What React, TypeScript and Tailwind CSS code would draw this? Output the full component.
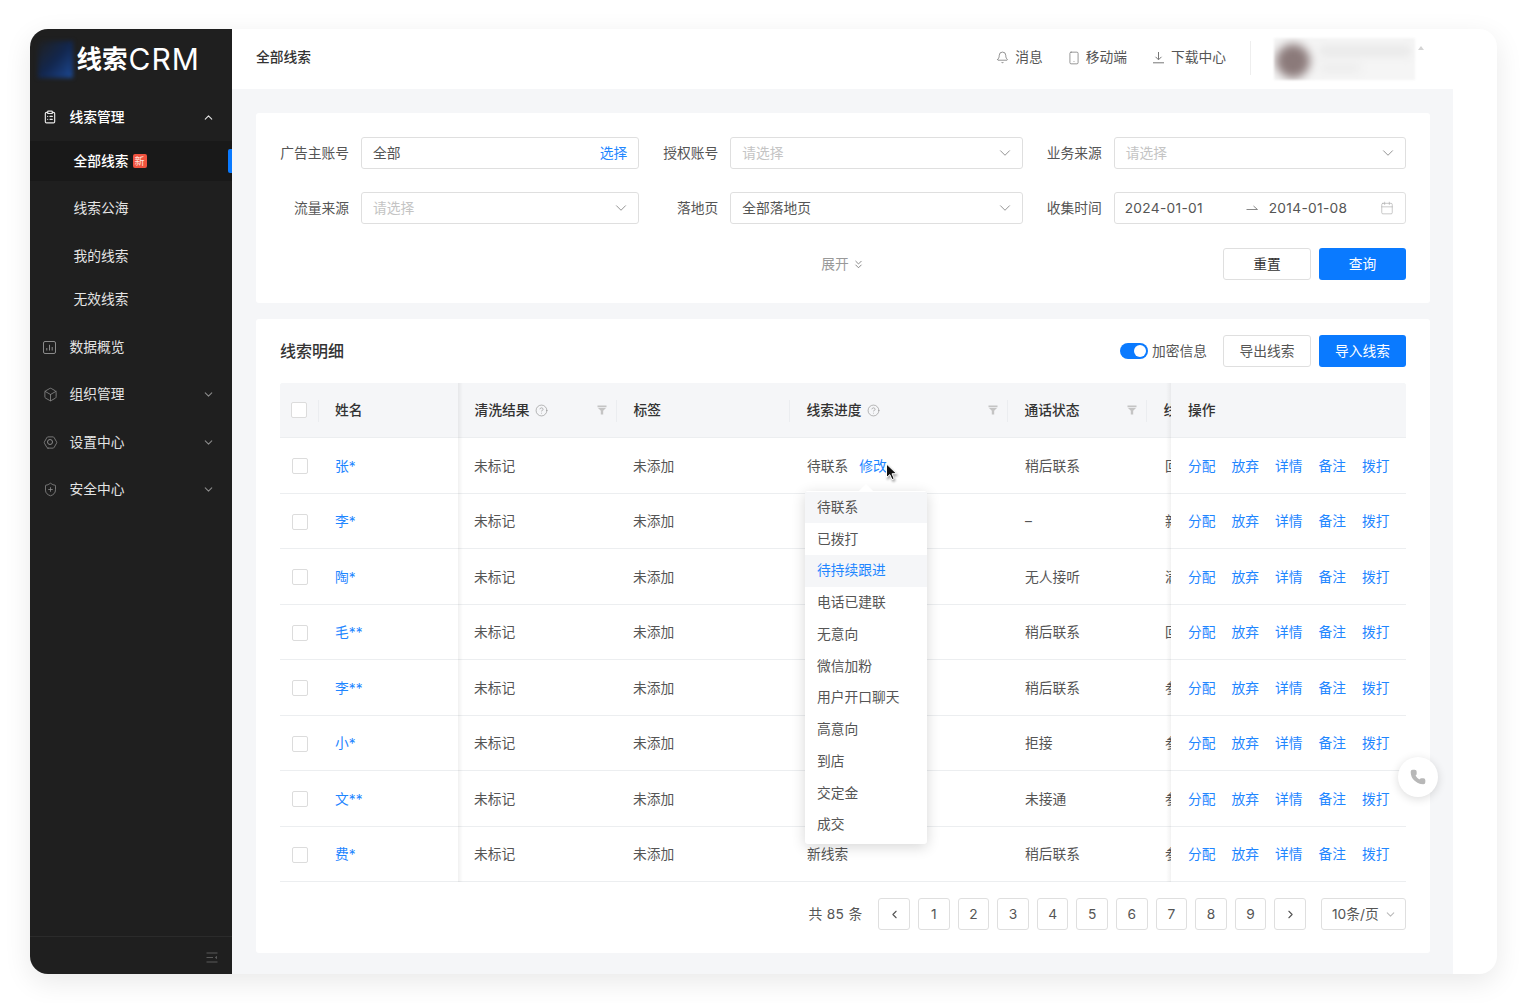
import { Bell, Box, Calendar, ChevronDown, ChevronLeft, ChevronRight, ChevronUp, ChevronsDown, CircleHelp, ClipboardList, Hexagon, Phone, ShieldPlus, Smartphone } from "lucide-react";
import type { ReactNode } from "react";

const rows = [
  { name: "张*", progress: "待联系", call: "稍后联系", next: "回" },
  { name: "李*", progress: "", call: "–", next: "新" },
  { name: "陶*", progress: "", call: "无人接听", next: "满" },
  { name: "毛**", progress: "", call: "稍后联系", next: "回" },
  { name: "李**", progress: "", call: "稍后联系", next: "参" },
  { name: "小*", progress: "", call: "拒接", next: "参" },
  { name: "文**", progress: "", call: "未接通", next: "参" },
  { name: "费*", progress: "新线索", call: "稍后联系", next: "参" },
];

const progressOptions = ["待联系", "已拨打", "待持续跟进", "电话已建联", "无意向", "微信加粉", "用户开口聊天", "高意向", "到店", "交定金", "成交"];

function ChartIcon() {
  return (
    <svg width="13" height="13" viewBox="0 0 13 13" fill="none" stroke="#8a8a8a" strokeWidth="1">
      <rect x="0.5" y="0.5" width="12" height="12" rx="1.5" />
      <path d="M3.8 9.5V7M6.5 9.5V3.8M9.2 9.5V6" />
    </svg>
  );
}

function SettingIcon() {
  return (
    <span className="relative flex h-[15px] w-[15px] items-center justify-center">
      <Hexagon size={15} strokeWidth={1.3} color="#8a8a8a" className="rotate-90" />
      <span className="absolute h-[6px] w-[6px] rounded-full border border-[#8a8a8a]" />
    </span>
  );
}

function Funnel() {
  return (
    <svg width="10" height="10" viewBox="0 0 10 10" fill="#c4c4c4">
      <path d="M0.5 0.5H9.5V2.2H0.5Z" />
      <path d="M1 3H9L6.2 5.8V9.5H3.8V5.8Z" />
    </svg>
  );
}

function DownloadIcon() {
  return (
    <svg width="13" height="13" viewBox="0 0 13 13" fill="none" stroke="#777" strokeWidth="1" className="ml-[25px]">
      <path d="M6.5 1V8.5M3.5 5.8L6.5 8.8L9.5 5.8M1 11.8H12" />
    </svg>
  );
}

function RangeArrow() {
  return (
    <svg width="12" height="8" viewBox="0 0 12 8" fill="none" stroke="#888" strokeWidth="1">
      <path d="M0.5 5.5H11.5L7.5 2" />
    </svg>
  );
}

function NavItem({ icon, label, chevron, className }: { icon: ReactNode; label: string; chevron?: "up" | "down"; className: string }) {
  return (
    <div className={`flex items-center pl-[13px] pr-[17px] ${className}`}>
      <span className="flex w-[27px] shrink-0">{icon}</span>
      <span className="flex-1">{label}</span>
      {chevron === "up" && <ChevronUp size={13} color="#e5e5e5" />}
      {chevron === "down" && <ChevronDown size={13} color="#8a8a8a" />}
    </div>
  );
}

function Sidebar() {
  return (
    <aside className="flex w-[202.5px] shrink-0 flex-col bg-[#1f1f1f] text-[13.75px] text-[#e4e4e4]">
      <div className="flex h-[64px] items-center pb-[4px] pl-[8px]">
        <div className="h-[37px] w-[35px] bg-gradient-to-br from-[#1f1f1f] via-[#12264d] to-[#1c4a96] blur-[2px]" />
        <div className="ml-[4px] flex items-center font-bold leading-none text-white">
          <span className="text-[25.5px]">线索</span>
          <span className="ml-[1px] text-[30px] font-normal tracking-[1px]">CRM</span>
        </div>
      </div>
      <NavItem icon={<ClipboardList size={14} color="#e8e8e8" />} label="线索管理" chevron="up" className="h-[48px] font-medium text-white" />
      <div className="relative flex h-[40px] items-center bg-[#191919] pl-[44px] font-medium text-white">
        全部线索
        <span className="ml-[4px] flex h-[14px] w-[14px] items-center justify-center rounded-[2px] bg-[#f0533f] text-[10px] font-normal leading-none text-[#ffe1dc]">新</span>
        <span className="absolute right-0 top-[8px] h-[24px] w-[4px] rounded-l-[2px] bg-[#0a7aff]" />
      </div>
      <div className="mt-[3px] flex h-[48px] items-center pl-[44px]">线索公海</div>
      <div className="flex h-[48px] items-center pl-[44px]">我的线索</div>
      <div className="flex h-[38px] items-center pl-[44px]">无效线索</div>
      <NavItem icon={<ChartIcon />} label="数据概览" className="mt-[5px] h-[48px]" />
      <NavItem icon={<Box size={15} strokeWidth={1.3} color="#8a8a8a" />} label="组织管理" chevron="down" className="h-[47.5px]" />
      <NavItem icon={<SettingIcon />} label="设置中心" chevron="down" className="h-[47.5px]" />
      <NavItem icon={<ShieldPlus size={15} strokeWidth={1.3} color="#8a8a8a" />} label="安全中心" chevron="down" className="h-[47.5px]" />
      <div className="mt-auto flex h-[38px] items-center justify-end border-t border-[#2b2b2b] pr-[14px] pt-[3px]">
        <svg width="12" height="11" viewBox="0 0 12 11" fill="none" stroke="#5a5a5a" strokeWidth="1.2">
          <path d="M0.5 1H11.5M0.5 5.5H7M0.5 10H11.5" />
          <path d="M11 3.8V7.2L8.8 5.5Z" fill="#5a5a5a" stroke="none" />
        </svg>
      </div>
    </aside>
  );
}

function TopBar() {
  return (
    <header className="flex h-[60px] items-center pb-[3px] pl-[24px] text-[13.75px] text-[#555]">
      <div className="font-medium text-[#333]">全部线索</div>
      <div className="ml-auto flex items-center">
        <Bell size={13} strokeWidth={1.3} color="#666" />
        <span className="ml-[6px]">消息</span>
        <Smartphone size={14} strokeWidth={1.3} color="#777" className="ml-[24px]" />
        <span className="ml-[5px]">移动端</span>
        <DownloadIcon />
        <span className="ml-[6px]">下载中心</span>
        <div className="ml-[24px] h-[34px] w-px bg-[#eeeeee]" />
        <div className="relative ml-[23px] mt-[3px] h-[42px] w-[141px] overflow-hidden bg-[#f5f5f5] blur-[1px]">
          <div className="absolute left-[2px] top-[6px] h-[34px] w-[34px] rounded-full bg-[#8b7a7a] blur-[5px]" />
          <div className="absolute left-[46px] top-[8px] h-[10px] w-[90px] bg-[#e8e8e8] blur-[4px]" />
          <div className="absolute left-[46px] top-[26px] h-[8px] w-[40px] bg-[#ececec] blur-[4px]" />
        </div>
        <span className="ml-[3px] mr-[73px] mt-[-20px] h-0 w-0 border-x-[3px] border-b-[4px] border-x-transparent border-b-[#d4d4d4]" />
      </div>
    </header>
  );
}

function Field({ label, labelWidth, children }: { label: string; labelWidth: string; children: ReactNode }) {
  return (
    <div className="flex items-center">
      <label className={`mr-[12px] shrink-0 text-right text-[#555] ${labelWidth}`}>{label}</label>
      {children}
    </div>
  );
}

function SelectBox({ value, placeholder }: { value?: string; placeholder?: string }) {
  return (
    <div className="flex h-[32px] flex-1 items-center justify-between rounded-[3px] border border-[#dfdfdf] pl-[11px] pr-[8px]">
      {value ? <span className="text-[#555]">{value}</span> : <span className="text-[#c4c4c4]">{placeholder}</span>}
      <ChevronDown size={18} strokeWidth={1.2} color="#888" />
    </div>
  );
}

function FilterCard() {
  return (
    <section className="rounded-[3px] bg-white px-[24px] pb-[23px] pt-[24px] text-[13.75px]">
      <div className="grid grid-cols-3 gap-x-[24px] gap-y-[23px]">
        <Field label="广告主账号" labelWidth="w-[69px]">
          <div className="flex h-[32px] flex-1 items-center justify-between rounded-[3px] border border-[#dfdfdf] pl-[11px] pr-[11px]">
            <span className="text-[#555]">全部</span>
            <span className="text-[#1f86ff]">选择</span>
          </div>
        </Field>
        <Field label="授权账号" labelWidth="w-[55px]">
          <SelectBox placeholder="请选择" />
        </Field>
        <Field label="业务来源" labelWidth="w-[55px]">
          <SelectBox placeholder="请选择" />
        </Field>
        <Field label="流量来源" labelWidth="w-[69px]">
          <SelectBox placeholder="请选择" />
        </Field>
        <Field label="落地页" labelWidth="w-[55px]">
          <SelectBox value="全部落地页" />
        </Field>
        <Field label="收集时间" labelWidth="w-[55px]">
          <div className="flex h-[32px] flex-1 items-center rounded-[3px] border border-[#dfdfdf] pl-[10px] pr-[11px] tracking-[0.3px] text-[#555]">
            <span className="w-[121px]">2024-01-01</span>
            <RangeArrow />
            <span className="ml-[11px]">2014-01-08</span>
            <Calendar size={14} strokeWidth={1.1} color="#aaa" className="ml-auto" />
          </div>
        </Field>
      </div>
      <div className="mt-[24px] grid grid-cols-[1fr_auto_1fr] items-center">
        <div />
        <div className="flex items-center gap-[3px] text-[#999]">
          展开
          <ChevronsDown size={13} strokeWidth={1.6} color="#777" />
        </div>
        <div className="flex justify-end gap-[8px]">
          <button className="h-[32px] w-[88px] rounded-[3px] border border-[#dfdfdf] bg-white text-[#333]">重置</button>
          <button className="h-[32px] w-[87px] rounded-[3px] bg-[#0a7aff] text-white">查询</button>
        </div>
      </div>
    </section>
  );
}

function HeadCell({ label, width, help, filter }: { label: string; width: string; help?: boolean; filter?: boolean }) {
  return (
    <div className={`flex shrink-0 items-center pl-[16.5px] pr-[10px] ${width}`}>
      <span className="font-medium text-[#333]">{label}</span>
      {help && <CircleHelp size={13} strokeWidth={1.1} color="#888" className="ml-[5px]" />}
      {filter && (
        <span className="ml-auto">
          <Funnel />
        </span>
      )}
    </div>
  );
}

function Divider({ className }: { className: string }) {
  return <span className={`absolute top-[17px] h-[22px] w-px bg-[#ebedf0] ${className}`} />;
}

function LeadsTable() {
  return (
    <div className="relative text-[13.75px]">
      <div className="relative flex h-[55px] overflow-hidden rounded-t-[3px] border-b border-[#eceef0] bg-[#f5f6f8]">
        <div className="relative z-10 flex w-[178px] shrink-0 items-center bg-[#f5f6f8]">
          <span className="ml-[11px] h-[16px] w-[16px] rounded-[2px] border border-[#dcdcdc] bg-white" />
          <Divider className="left-[38px]" />
          <span className="ml-[28px] font-medium text-[#333]">姓名</span>
        </div>
        <div className="relative flex w-[713px] shrink-0 overflow-hidden">
          <HeadCell label="清洗结果" width="w-[159px]" help filter />
          <HeadCell label="标签" width="w-[173px]" />
          <HeadCell label="线索进度" width="w-[218px]" help filter />
          <HeadCell label="通话状态" width="w-[139px]" filter />
          <HeadCell label="线索" width="w-[120px]" />
          <Divider className="left-[158px]" />
          <Divider className="left-[331px]" />
          <Divider className="left-[549px]" />
          <Divider className="left-[688px]" />
        </div>
        <div className="relative z-10 flex w-[235px] shrink-0 items-center bg-[#f5f6f8] pl-[17px] font-medium text-[#333]">操作</div>
      </div>
      {rows.map((row) => (
        <div key={row.name} className="flex h-[55.5px] overflow-hidden border-b border-[#eceef0] pt-[1.5px] text-[#555]">
          <div className="flex w-[178px] shrink-0 items-center bg-white">
            <span className="ml-[11.5px] h-[16px] w-[16px] rounded-[2px] border border-[#dcdcdc] bg-white" />
            <span className="ml-[27.5px] text-[#1f86ff]">{row.name}</span>
          </div>
          <div className="flex w-[713px] shrink-0 items-center overflow-hidden">
            <span className="w-[159px] shrink-0 pl-[16px]">未标记</span>
            <span className="w-[173px] shrink-0 pl-[16px]">未添加</span>
            <span className="w-[218px] shrink-0 pl-[17px]">
              {row.progress}
              {row.name === "张*" && <span className="ml-[11px] text-[#1f86ff]">修改</span>}
            </span>
            <span className="w-[139px] shrink-0 pl-[17px]">{row.call}</span>
            <span className="w-[100px] shrink-0 whitespace-nowrap pl-[18px]">{row.next}</span>
          </div>
          <div className="flex w-[235px] shrink-0 items-center gap-[16px] bg-white pl-[17px] text-[#1f86ff]">
            <span>分配</span>
            <span>放弃</span>
            <span>详情</span>
            <span>备注</span>
            <span>拨打</span>
          </div>
        </div>
      ))}
      <span className="absolute bottom-0 left-[178px] top-0 z-10 w-[5px] bg-gradient-to-r from-[rgba(0,0,0,0.06)] to-transparent" />
      <span className="absolute bottom-0 left-[886px] top-0 z-10 w-[5px] bg-gradient-to-l from-[rgba(0,0,0,0.05)] to-transparent" />
      <div className="absolute left-[525px] top-[108px] z-20 w-[122px] rounded-[3px] bg-white pb-[3.5px] pt-[0.5px] text-[#555] shadow-[0_3px_14px_rgba(0,0,0,0.16)]">
        <span className="absolute left-[56px] top-[-5px] h-[10px] w-[10px] rotate-45 bg-white" />
        {progressOptions.map((option, i) => (
          <div key={option} className={`relative flex h-[31.73px] items-center px-[12px] ${i === 0 ? "bg-[#f5f6f8]" : ""} ${i === 2 ? "bg-[#f5f6f8] text-[#1f86ff]" : ""}`}>
            {option}
          </div>
        ))}
      </div>
      <svg width="14" height="19" viewBox="0 0 14 19" className="absolute left-[605px] top-[80px] z-30 drop-shadow-[1px_2px_1px_rgba(0,0,0,0.35)]">
        <path d="M1.5 1L1.5 14.5L4.8 11.6L7 16.6L9.2 15.6L7 10.8L11.5 10.6Z" fill="#111" stroke="#fff" strokeWidth="1" />
      </svg>
    </div>
  );
}

function Pagination() {
  return (
    <div className="mt-[16px] flex items-center justify-end text-[13.75px] text-[#555]">
      <span className="mr-[16px] tracking-[0.3px]">共 85 条</span>
      <div className="flex gap-[8px]">
        <span className="flex h-[32px] w-[31.6px] items-center justify-center rounded-[3px] border border-[#dfdfdf]">
          <ChevronLeft size={13} strokeWidth={2} color="#555" />
        </span>
        {[1, 2, 3, 4, 5, 6, 7, 8, 9].map((n) => (
          <span key={n} className="flex h-[32px] w-[31.6px] items-center justify-center rounded-[3px] border border-[#dfdfdf]">
            {n}
          </span>
        ))}
        <span className="flex h-[32px] w-[31.6px] items-center justify-center rounded-[3px] border border-[#dfdfdf]">
          <ChevronRight size={13} strokeWidth={2} color="#555" />
        </span>
      </div>
      <div className="ml-[15px] flex h-[32px] w-[85px] items-center justify-between rounded-[3px] border border-[#dfdfdf] pl-[10px] pr-[8px]">
        10条/页
        <ChevronDown size={13} color="#bbb" />
      </div>
    </div>
  );
}

export default function App() {
  return (
    <div className="h-[1003px] w-[1526px] overflow-hidden bg-white pl-[29.5px] pt-[29px] font-['Inter','Noto_Sans_CJK_SC',sans-serif]">
      <div className="relative flex h-[945px] w-[1467.5px] overflow-hidden rounded-[18px] bg-white shadow-[0_8px_28px_rgba(0,0,0,0.09)]">
        <Sidebar />
        <div className="flex min-w-0 flex-1 flex-col">
          <TopBar />
          <div className="flex flex-1">
            <main className="flex w-[1221px] flex-col gap-[16px] bg-[#f5f6f8] pl-[24px] pr-[23px] pt-[24px]">
              <FilterCard />
              <section className="h-[634px] rounded-[3px] bg-white px-[24px] pt-[16px]">
                <div className="mb-[16px] flex h-[32px] items-center text-[13.75px]">
                  <h2 className="text-[16px] font-medium text-[#333]">线索明细</h2>
                  <div className="ml-auto flex h-[16px] w-[28px] items-center justify-end rounded-full bg-[#0a7aff] pr-[2px]">
                    <span className="h-[12px] w-[12px] rounded-full bg-white" />
                  </div>
                  <span className="ml-[4px] text-[#555]">加密信息</span>
                  <button className="ml-[16px] h-[32px] w-[88px] rounded-[3px] border border-[#dfdfdf] bg-white text-[#555]">导出线索</button>
                  <button className="ml-[8px] h-[32px] w-[87px] rounded-[3px] bg-[#0a7aff] text-white">导入线索</button>
                </div>
                <LeadsTable />
                <Pagination />
              </section>
            </main>
          </div>
        </div>
        <div className="absolute left-[1368.5px] top-[728px] z-30 flex h-[40px] w-[40px] items-center justify-center rounded-full bg-white shadow-[0_2px_10px_rgba(0,0,0,0.14)]">
          <Phone size={16} fill="#b8b8b8" color="#b8b8b8" />
        </div>
      </div>
    </div>
  );
}
